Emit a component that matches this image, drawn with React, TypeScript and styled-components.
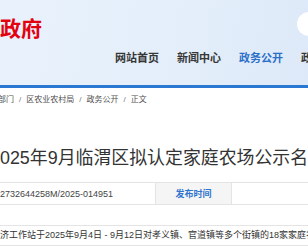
import React from 'react';
import styled, { createGlobalStyle } from 'styled-components';

const GlobalStyle = createGlobalStyle`
  body {
    margin: 0;
    background: #fff;
    font-family: "Liberation Sans", "Noto Sans CJK SC", sans-serif;
  }
`;

const Page = styled.div`
  width: 308px;
  height: 252px;
  overflow: hidden;
  background: #fff;
`;

const Header = styled.header`
  height: 85px;
  display: flex;
  flex-direction: column;
  background: linear-gradient(100deg, #e9f2fc 0%, #e3eefa 60%, #dde9f8 100%);
  border-bottom: 3px solid #2b78d3;
`;

const TopRow = styled.div`
  display: flex;
  justify-content: space-between;
  align-items: flex-start;
  padding-top: 12px;
`;

const SiteName = styled.div`
  margin-top: 5px;
  font-family: "Noto Sans CJK SC", sans-serif;
  font-size: 21px;
  line-height: 21px;
  font-weight: 700;
  color: #e3000f;
`;

const SearchPill = styled.div`
  width: 44px;
  height: 24px;
  margin-right: -33px;
  border-radius: 12px;
  background: #fff;
`;

const Nav = styled.nav`
  display: flex;
  gap: 18px;
  margin-top: 10px;
  padding-left: 115px;
`;

const NavItem = styled.span<{ $active?: boolean }>`
  font-family: "Noto Sans CJK SC", sans-serif;
  font-size: 11px;
  line-height: 18px;
  font-weight: 700;
  white-space: nowrap;
  color: ${p => (p.$active ? '#2c6fc8' : '#363636')};
`;

const Breadcrumb = styled.div`
  display: flex;
  margin-left: -2px;
  padding-top: 6px;
  font-size: 8px;
  line-height: 12px;
  color: #505050;
  white-space: nowrap;
`;

const Sep = styled.span`
  margin: 0 5px;
  color: #777;
`;

const Title = styled.h1`
  margin: 40px 0 0 -10px;
  font-size: 17.9px;
  line-height: 24px;
  font-weight: 400;
  color: #333;
  white-space: nowrap;
`;

const InfoRow = styled.div`
  display: flex;
  height: 21px;
  margin-top: 12px;
  border-top: 1px solid #e4e4e4;
  border-bottom: 1px solid #e4e4e4;
`;

const Cell = styled.div<{ $width: number; $label?: boolean }>`
  display: flex;
  align-items: center;
  justify-content: ${p => (p.$label ? 'center' : 'flex-start')};
  width: ${p => p.$width}px;
  flex: none;
  border-right: 1px solid #e4e4e4;
  background: ${p => (p.$label ? '#f5f5f5' : '#fff')};
  font-size: 9px;
  font-weight: ${p => (p.$label ? 700 : 400)};
  color: ${p => (p.$label ? '#2f74cf' : '#444')};
  white-space: nowrap;
`;

const Content = styled.div`
  height: 19px;
  margin-top: 20px;
  border-top: 1px solid #e4e4e4;
  border-bottom: 1px solid #e4e4e4;
  font-size: 9px;
  line-height: 19px;
  color: #333;
  white-space: nowrap;
`;

const crumbs = ['部门', '区农业农村局', '政务公开', '正文'];
const navItems = ['网站首页', '新闻中心', '政务公开', '政'];

export default function App() {
  return (
    <Page>
      <GlobalStyle />
      <Header>
        <TopRow>
          <SiteName>政府</SiteName>
          <SearchPill />
        </TopRow>
        <Nav>
          {navItems.map(item => (
            <NavItem key={item} $active={item === '政务公开'}>
              {item}
            </NavItem>
          ))}
        </Nav>
      </Header>
      <Breadcrumb>
        {crumbs.map((c, i) => (
          <React.Fragment key={c}>
            {i > 0 && <Sep>/</Sep>}
            <span>{c}</span>
          </React.Fragment>
        ))}
      </Breadcrumb>
      <Title>2025年9月临渭区拟认定家庭农场公示名单</Title>
      <InfoRow>
        <Cell $width={155}>2732644258M/2025-014951</Cell>
        <Cell $width={75} $label>发布时间</Cell>
        <Cell $width={100} />
      </InfoRow>
      <Content>
        济工作站于2025年9月4日 - 9月12日对孝义镇、官道镇等多个街镇的18家家庭农场进行了认定
      </Content>
    </Page>
  );
}
